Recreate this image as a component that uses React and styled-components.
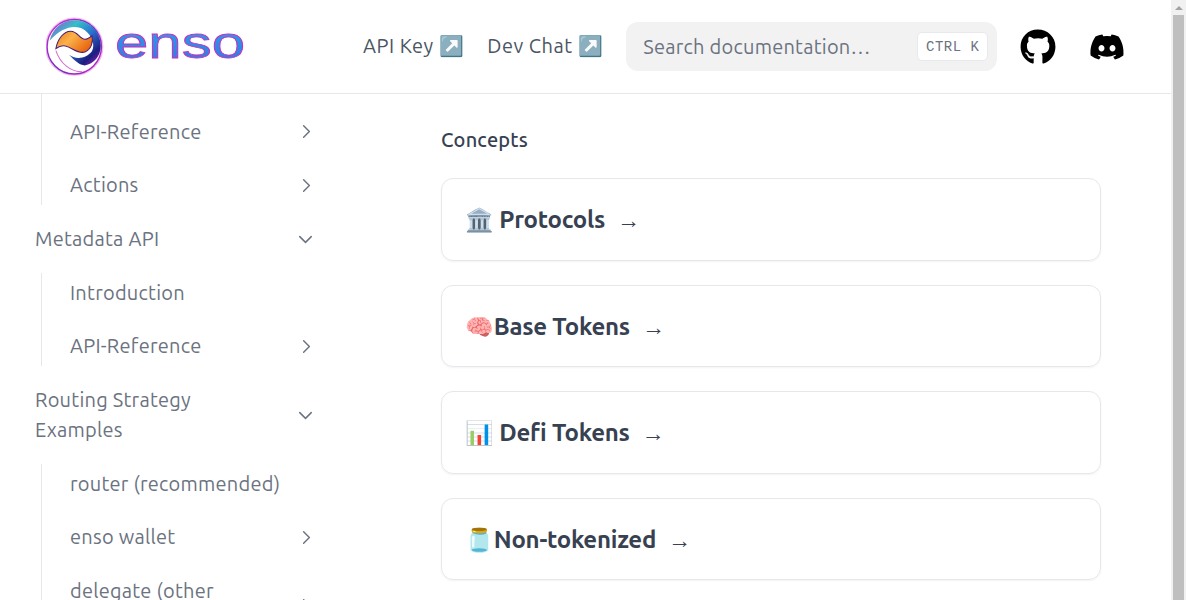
import React from "react";
import styled, { createGlobalStyle } from "styled-components";
import { ChevronRight, ChevronDown } from "lucide-react";
import { FaGithub, FaDiscord } from "react-icons/fa";

const GlobalStyle = createGlobalStyle`
  html, body {
    margin: 0;
    padding: 0;
    height: 100%;
    overflow: hidden;
    background: #fff;
  }
  body {
    font-family: Ubuntu, "Noto Sans", "Open Sans", sans-serif;
  }
`;

const Page = styled.div`
  display: flex;
  height: 100vh;
  overflow: hidden;
`;

const Viewport = styled.div`
  flex: 1;
  min-width: 0;
  display: flex;
  flex-direction: column;
`;

const ScrollTrack = styled.div`
  width: 15px;
  box-sizing: border-box;
  padding: 6px 2px 0;
  background: #f1f1f1;
  display: flex;
  flex-direction: column;
  align-items: center;
`;

const ScrollArrow = styled.div`
  border-left: 4px solid transparent;
  border-right: 4px solid transparent;
  border-bottom: 4px solid #a3a3a3;
`;

const ScrollThumb = styled.div`
  flex: 1;
  align-self: stretch;
  margin-top: 5px;
  background: #bfbfbf;
`;

const HeaderBar = styled.header`
  height: 93px;
  flex-shrink: 0;
  display: flex;
  align-items: center;
  border-bottom: 1px solid #e5e7eb;
  padding-left: 46px;
`;

const Logo = styled.svg`
  width: 200px;
  height: 64px;
  flex-shrink: 0;
`;

const NavLink = styled.a`
  font-size: 20px;
  letter-spacing: 0.5px;
  color: #4b5563;
  white-space: nowrap;
  padding-bottom: 2px;
  margin-left: ${(p) => p.$left}px;
`;

const SearchBox = styled.div`
  width: 371px;
  height: 49px;
  margin-left: 23px;
  box-sizing: border-box;
  padding: 0 9px 0 17px;
  display: flex;
  align-items: center;
  justify-content: space-between;
  background: #f2f2f3;
  border-radius: 12px;
  font-size: 20px;
  letter-spacing: 0.24px;
  color: #6b7280;
`;

const Kbd = styled.kbd`
  width: 71px;
  height: 29px;
  box-sizing: border-box;
  display: flex;
  align-items: center;
  justify-content: center;
  background: #fff;
  border: 1px solid #e8e9ec;
  border-radius: 5px;
  font-family: "Liberation Mono", monospace;
  font-size: 14px;
  letter-spacing: 0.5px;
  color: #6b7280;
  white-space: pre;
`;

const SocialLink = styled.a`
  display: flex;
  color: #000;
  margin-left: ${(p) => p.$left}px;
`;

const Body = styled.div`
  flex: 1;
  min-height: 0;
  display: flex;
`;

const Sidebar = styled.nav`
  width: 331px;
  flex-shrink: 0;
  box-sizing: border-box;
  padding-left: 35px;
  overflow: hidden;
`;

const SubList = styled.div`
  margin: ${(p) => (p.$first ? "0" : "13.65px")} 0 0 6px;
  padding-top: ${(p) => (p.$first ? "17.8px" : "0")};
  border-left: 1px solid #e5e7eb;
  display: flex;
  flex-direction: column;
  gap: 13.65px;
`;

const Row = styled.div`
  display: flex;
  align-items: center;
  justify-content: space-between;
  width: ${(p) => (p.$nested ? "276px" : "282px")};
  box-sizing: border-box;
  padding: 5px 0 5px ${(p) => (p.$nested ? "28px" : "0")};
  margin-top: ${(p) => (p.$nested ? "0" : "13.65px")};
  font-size: 20px;
  line-height: 30px;
  letter-spacing: 0.25px;
  color: #6b7280;
`;

const RowLabel = styled.span`
  max-width: 222px;
`;

const Main = styled.main`
  flex: 1;
  padding: 31px 0 0 110px;
`;

const SectionTitle = styled.div`
  font-size: 20px;
  line-height: 30px;
  font-weight: 500;
  letter-spacing: 0.2px;
  color: #374151;
  margin-bottom: 23.4px;
`;

const Card = styled.a`
  display: flex;
  align-items: center;
  width: 660px;
  height: 82.4px;
  box-sizing: border-box;
  padding: 1.6px 24px 0;
  margin-bottom: 24px;
  border: 1px solid #e5e7eb;
  border-radius: 12px;
  box-shadow: 0 1px 2px rgba(0, 0, 0, 0.05);
`;

const CardTitle = styled.h3`
  margin: 0;
  font-size: 24px;
  line-height: 32px;
  font-weight: 700;
  letter-spacing: -0.25px;
  color: #374151;
  white-space: pre;
`;

const Emoji = styled.span`
  font-size: 23px;
  margin-left: -1px;
`;

const Arrow = styled.span`
  margin-left: 7px;
  font-weight: 400;
  font-size: 23px;
`;

const EnsoLogo = () => (
  <Logo viewBox="0 0 200 64">
    <defs>
      <linearGradient id="ring" x1="0" y1="0" x2="1" y2="1">
        <stop offset="0" stopColor="#d62fd0" />
        <stop offset="0.5" stopColor="#6a2fc8" />
        <stop offset="1" stopColor="#c724c4" />
      </linearGradient>
      <linearGradient id="sweep" x1="0" y1="0" x2="1" y2="1">
        <stop offset="0" stopColor="#a445d8" />
        <stop offset="0.3" stopColor="#35c0c8" />
        <stop offset="0.55" stopColor="#2a6fd0" />
        <stop offset="0.8" stopColor="#1d1f80" />
        <stop offset="1" stopColor="#b020c0" />
      </linearGradient>
      <linearGradient id="flame" x1="0" y1="0" x2="1" y2="0.6">
        <stop offset="0" stopColor="#f07a1a" />
        <stop offset="0.45" stopColor="#fbb24a" />
        <stop offset="1" stopColor="#e8650f" />
      </linearGradient>
      <linearGradient id="word" x1="0" y1="0" x2="0" y2="1">
        <stop offset="0" stopColor="#1fb0ee" />
        <stop offset="1" stopColor="#3a6fe0" />
      </linearGradient>
      <filter id="soft" x="-10%" y="-10%" width="120%" height="120%">
        <feGaussianBlur stdDeviation="0.35" />
      </filter>
      <filter id="glow" x="-20%" y="-20%" width="140%" height="140%">
        <feGaussianBlur stdDeviation="2" />
      </filter>
    </defs>
    <g transform="translate(-3.5 -2.5) scale(0.353)">
      <circle cx="90" cy="97" r="80" fill="none" stroke="#f4b8ec" strokeWidth="5" filter="url(#glow)" />
      <g filter="url(#soft)">
        <circle cx="90" cy="97" r="77" fill="#fff" stroke="url(#ring)" strokeWidth="4" />
        <path
          d="M20 80C30 40 60 20 95 22c40 3 70 33 70 73 0 30-20 50-45 55-15 0-30-15-45-30 20 15 50 10 65-10 10-20 0-45-20-60-25-18-65-10-100 30Z"
          fill="url(#sweep)"
        />
        <path
          d="M38 102C43 75 60 53 80 53c20 0 25 23 40 23 8 0 15-6 20-10 5 17-2 38-20 46-20 6-35-12-55-17-10-3-20 2-27 7Z"
          fill="url(#flame)"
          stroke="#4a1f78"
          strokeWidth="3"
        />
        <path d="M38 108c12 37 42 60 74 60" fill="none" stroke="#d070d0" strokeWidth="3" />
      </g>
    </g>
    <text
      x="69"
      y="42.5"
      textLength="130"
      lengthAdjust="spacingAndGlyphs"
      fontFamily="'Liberation Sans', sans-serif"
      fontSize="45"
      fill="url(#word)"
      stroke="#d02cb8"
      strokeWidth="0.8"
      filter="url(#soft)"
    >
      enso
    </text>
  </Logo>
);

const Chevron = ({ open }) =>
  open ? (
    <ChevronDown size={23} strokeWidth={1.5} color="#6b7280" />
  ) : (
    <ChevronRight size={23} strokeWidth={1.5} color="#6b7280" />
  );

const NavRow = ({ label, nested, arrow }) => (
  <Row $nested={nested}>
    <RowLabel>{label}</RowLabel>
    {arrow && <Chevron open={arrow === "down"} />}
  </Row>
);

const cards = [
  { emoji: "🏛️", space: true, title: "Protocols" },
  { emoji: "🧠", title: "Base Tokens" },
  { emoji: "📊", space: true, title: "Defi Tokens" },
  { emoji: "🫙", title: "Non-tokenized" },
];

export default function App() {
  return (
    <>
      <GlobalStyle />
      <Page>
        <Viewport>
          <HeaderBar>
            <EnsoLogo />
            <NavLink $left={117}>API Key ↗️</NavLink>
            <NavLink $left={23}>Dev Chat ↗️</NavLink>
            <SearchBox>
              <span>Search documentation…</span>
              <Kbd>CTRL K</Kbd>
            </SearchBox>
            <SocialLink $left={23}>
              <FaGithub size={36} />
            </SocialLink>
            <SocialLink $left={33}>
              <FaDiscord size={36} />
            </SocialLink>
          </HeaderBar>
          <Body>
            <Sidebar>
              <SubList $first>
                <NavRow nested label="API-Reference" arrow="right" />
                <NavRow nested label="Actions" arrow="right" />
              </SubList>
              <NavRow label="Metadata API" arrow="down" />
              <SubList>
                <NavRow nested label="Introduction" />
                <NavRow nested label="API-Reference" arrow="right" />
              </SubList>
              <NavRow label="Routing Strategy Examples" arrow="down" />
              <SubList>
                <NavRow nested label="router (recommended)" />
                <NavRow nested label="enso wallet" arrow="right" />
                <NavRow nested label="delegate (other protocols)" arrow="right" />
              </SubList>
            </Sidebar>
            <Main>
              <SectionTitle>Concepts</SectionTitle>
              {cards.map((c) => (
                <Card key={c.title}>
                  <CardTitle>
                    <Emoji>{c.emoji}</Emoji>
                    {c.space ? " " : ""}
                    {c.title}
                    <Arrow> →</Arrow>
                  </CardTitle>
                </Card>
              ))}
            </Main>
          </Body>
        </Viewport>
        <ScrollTrack>
          <ScrollArrow />
          <ScrollThumb />
        </ScrollTrack>
      </Page>
    </>
  );
}
